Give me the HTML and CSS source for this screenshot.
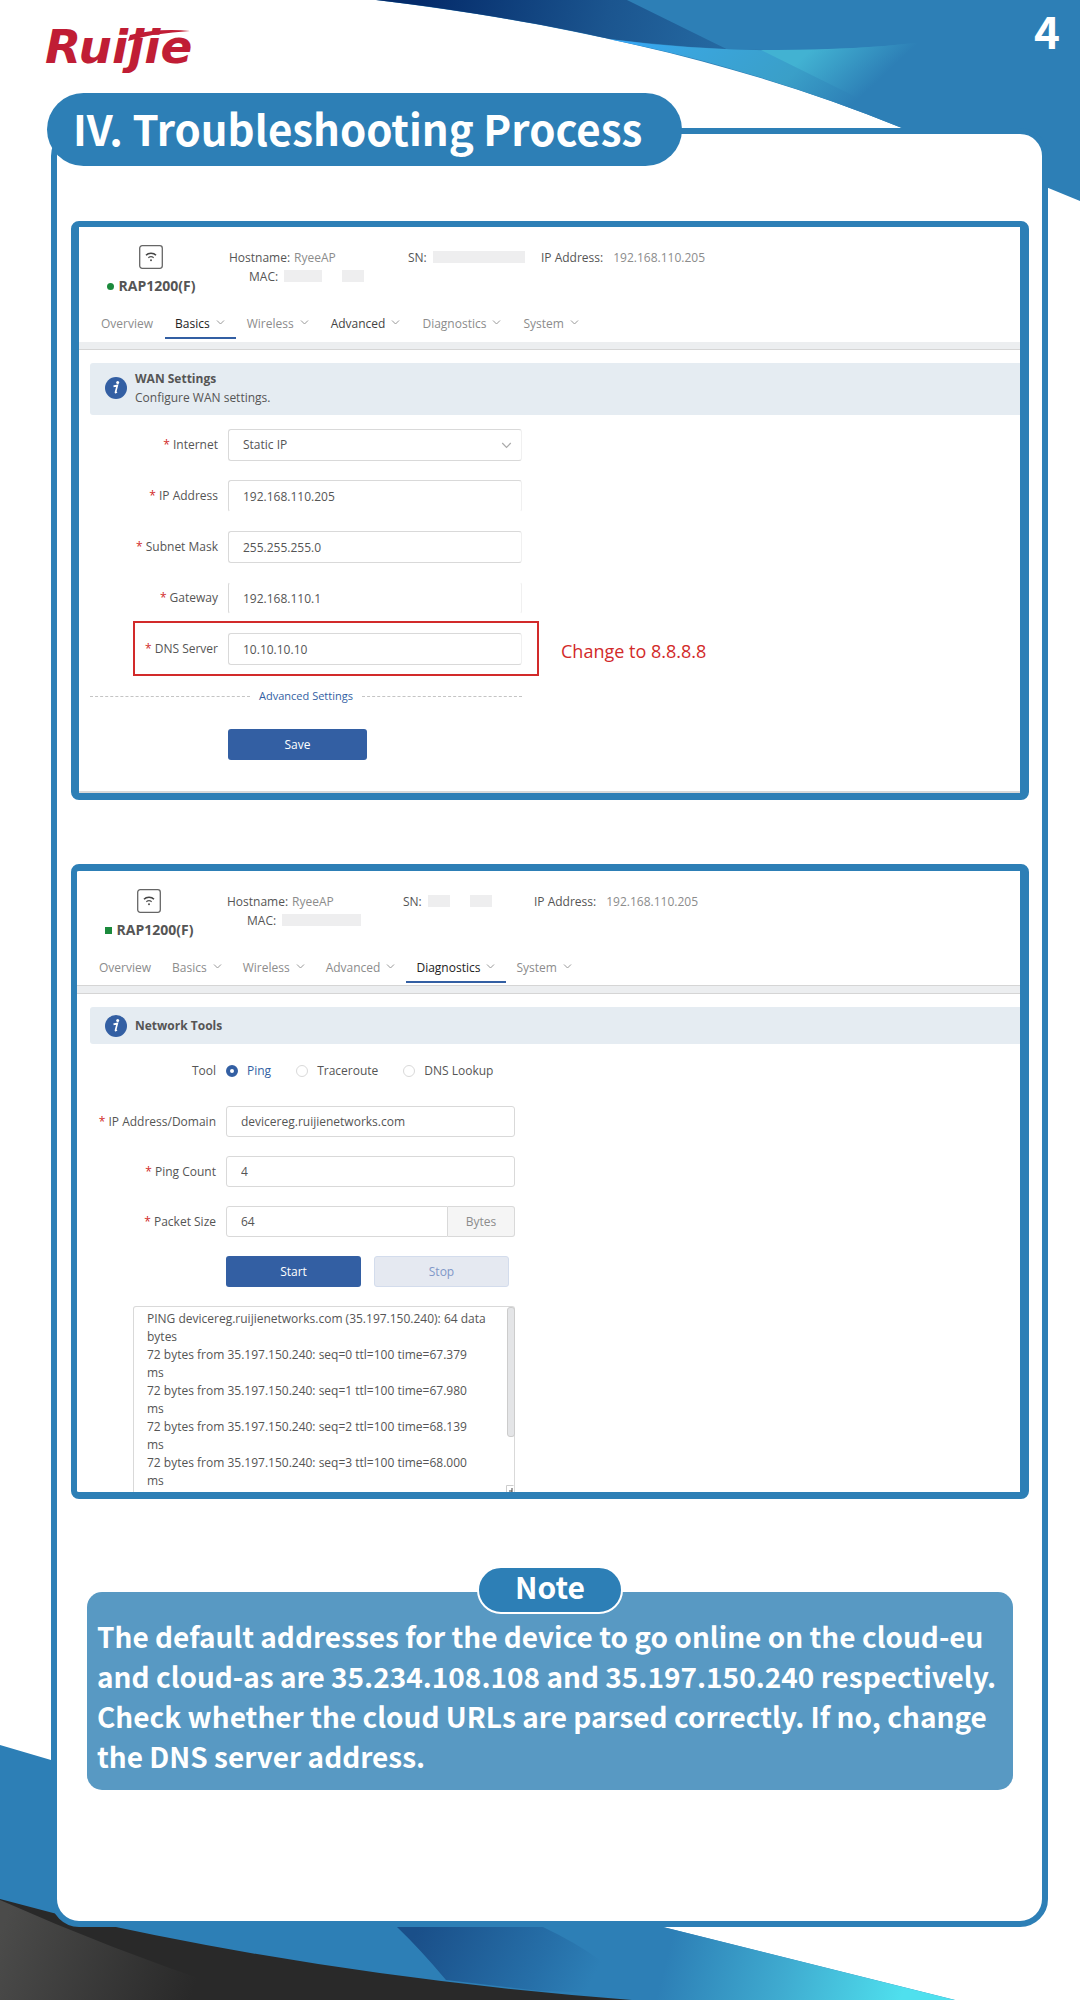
FILE: index.html
```html
<!DOCTYPE html>
<html lang="en">
<head>
<meta charset="utf-8">
<meta name="viewport" content="width=device-width, initial-scale=1">
<title>Ruijie - Troubleshooting Process</title>
<link rel="stylesheet" href="styles.css">
</head>
<body>
<svg class="defs" width="0" height="0" aria-hidden="true">
  <symbol id="chevron" viewBox="0 0 9 9"><path d="M1 2.5 4.5 6 8 2.5" fill="none" stroke="currentColor"/></symbol>
  <symbol id="ap" viewBox="0 0 24 24">
    <rect x="0.7" y="0.7" width="22.6" height="22.6" rx="2.5" fill="none" stroke="#666" stroke-width="1.3"/>
    <path d="M7 10.300C9.500 7.600 14.500 7.600 17 10.300" fill="none" stroke="#444" stroke-width="1.500"/>
    <path d="M9.300 12.800C10.800 11.500 13.200 11.500 14.700 12.800" fill="none" stroke="#555" stroke-width="1.200"/>
    <circle cx="12" cy="15.300" r="1" fill="#555"/>
  </symbol>
  <symbol id="info" viewBox="0 0 22 22">
    <circle cx="11" cy="11" r="11" fill="#335fa3"/>
    <circle cx="12.700" cy="5.500" r="1.500" fill="#fff"/>
    <path d="M8.500 9.300 12.300 8.400 10.500 15.300Q10.400 16 11.900 14.900" fill="none" stroke="#fff" stroke-width="1.700"/>
  </symbol>
</svg>
<div class="page">
  <svg class="wave wave--top" viewBox="0 0 1080 202" aria-hidden="true">
    <defs>
      <linearGradient id="navy" gradientUnits="userSpaceOnUse" x1="420" y1="0" x2="780" y2="90">
        <stop offset="0" stop-color="#042b6a"/><stop offset="0.5" stop-color="#1b558f"/><stop offset="1" stop-color="#2a74ac"/>
      </linearGradient>
      <linearGradient id="sky" gradientUnits="userSpaceOnUse" x1="703" y1="-45" x2="847" y2="110">
        <stop offset="0" stop-color="#34a7fb"/><stop offset="0.3" stop-color="#3aa5dc"/><stop offset="0.7" stop-color="#3a9fc8"/><stop offset="1" stop-color="#2d7fb6"/>
      </linearGradient>
      <linearGradient id="aqua" gradientUnits="userSpaceOnUse" x1="800" y1="60" x2="847" y2="110">
        <stop offset="0" stop-color="#42b2d2"/><stop offset="1" stop-color="#2d7fb6"/>
      </linearGradient>
    </defs>
    <path d="M376 0C560 22 740 62 902 128Q980 160 1080 201V0Z" fill="#2d7fb6"/>
    <path d="M376 0C470 11 545 25 610 39Q690 49 765 50L765 68 627 0Z" fill="url(#navy)"/>
    <path d="M608 39Q770 60 925 42L902 128C800 87 705 58 608 39Z" fill="url(#sky)"/>
    <path d="M761 50Q845 51 925 42L860 99Z" fill="url(#aqua)"/>
  </svg>
  <svg class="wave wave--bottom" viewBox="0 0 1080 256" aria-hidden="true">
    <defs>
      <linearGradient id="ash" gradientUnits="userSpaceOnUse" x1="0" y1="190" x2="190" y2="256">
        <stop offset="0" stop-color="#4b4b4a"/><stop offset="1" stop-color="#292929"/>
      </linearGradient>
      <linearGradient id="deep" gradientUnits="userSpaceOnUse" x1="420" y1="180" x2="580" y2="260">
        <stop offset="0" stop-color="#1a4f89"/><stop offset="0.7" stop-color="#266fa8"/><stop offset="1" stop-color="#2d7fb6"/>
      </linearGradient>
      <linearGradient id="cyan" gradientUnits="userSpaceOnUse" x1="660" y1="240" x2="890" y2="300">
        <stop offset="0" stop-color="#2d7fb6"/><stop offset="0.5" stop-color="#3fabd0"/><stop offset="1" stop-color="#4fe0ee"/>
      </linearGradient>
    </defs>
    <path d="M0 1 51 16 663 183 955 256H0Z" fill="#2d7fb6"/>
    <path d="M397 183Q420 205 446 236L540 247 635 250Q610 215 543 183Z" fill="url(#deep)"/>
    <path d="M625 198 663 183 955 256H640Z" fill="url(#cyan)"/>
    <path d="M0 155 57 170Q330 233 632 256H0Z" fill="#292929"/>
    <path d="M0 156Q110 205 230 245L250 256H0Z" fill="url(#ash)"/>
  </svg>

  <header class="masthead">
    <svg class="logo" viewBox="0 0 150 46" role="img" aria-label="Ruijie">
      <text class="logo__name" x="-1" y="33">Ruijie</text>
      <path class="logo__swoosh" d="M84 5Q113 -2 144 1Q108 3 82 11Z"/>
    </svg>
    <span class="masthead__page">4</span>
  </header>

  <main class="card">
    <h1 class="card__title">IV. Troubleshooting Process</h1>

    <section class="panel panel--wan">
      <div class="device">
        <div class="device__id">
          <svg class="device__icon"><use href="#ap"/></svg>
          <strong class="device__name"><i class="led"></i>RAP1200(F)</strong>
        </div>
        <dl class="facts">
          <div class="fact"><dt>Hostname:</dt><dd>RyeeAP</dd></div>
          <div class="fact"><dt>SN:</dt><dd class="mask mask--wide"></dd></div>
          <div class="fact fact--ip"><dt>IP Address:</dt><dd>192.168.110.205</dd></div>
          <div class="fact fact--mac"><dt>MAC:</dt><dd class="mask mask--short"></dd><dd class="mask mask--tiny"></dd></div>
        </dl>
      </div>
      <nav class="tabs">
        <a class="tab" href="#overview">Overview</a>
        <a class="tab tab--active" href="#basics">Basics<svg><use href="#chevron"/></svg></a>
        <a class="tab" href="#wireless">Wireless<svg><use href="#chevron"/></svg></a>
        <a class="tab tab--dark" href="#advanced">Advanced<svg><use href="#chevron"/></svg></a>
        <a class="tab" href="#diagnostics">Diagnostics<svg><use href="#chevron"/></svg></a>
        <a class="tab" href="#system">System<svg><use href="#chevron"/></svg></a>
      </nav>
      <div class="band"></div>
      <div class="banner banner--tall">
        <svg class="banner__icon"><use href="#info"/></svg>
        <div>
          <h2 class="banner__title">WAN Settings</h2>
          <p class="banner__text">Configure WAN settings.</p>
        </div>
      </div>
      <form class="form">
        <div class="row">
          <label class="label label--required" for="internet">Internet</label>
          <div class="picker">
            <select class="field" id="internet"><option>Static IP</option></select>
            <svg class="picker__arrow"><use href="#chevron"/></svg>
          </div>
        </div>
        <div class="row">
          <label class="label label--required" for="ip">IP Address</label>
          <input class="field field--no-bottom" id="ip" value="192.168.110.205">
        </div>
        <div class="row">
          <label class="label label--required" for="mask">Subnet Mask</label>
          <input class="field" id="mask" value="255.255.255.0">
        </div>
        <div class="row">
          <label class="label label--required" for="gateway">Gateway</label>
          <input class="field field--no-bottom field--no-top" id="gateway" value="192.168.110.1">
        </div>
        <div class="callout">
          <div class="row row--marked">
            <label class="label label--required" for="dns">DNS Server</label>
            <input class="field" id="dns" value="10.10.10.10">
          </div>
          <span class="callout__hint">Change to 8.8.8.8</span>
        </div>
        <div class="divider"><a href="#advanced-settings">Advanced Settings</a></div>
        <button class="button button--save" type="button">Save</button>
      </form>
    </section>

    <section class="panel panel--tools">
      <div class="device">
        <div class="device__id">
          <svg class="device__icon"><use href="#ap"/></svg>
          <strong class="device__name"><i class="led led--square"></i>RAP1200(F)</strong>
        </div>
        <dl class="facts">
          <div class="fact"><dt>Hostname:</dt><dd>RyeeAP</dd></div>
          <div class="fact"><dt>SN:</dt><dd class="mask mask--tiny"></dd><dd class="mask mask--tiny"></dd></div>
          <div class="fact fact--ip"><dt>IP Address:</dt><dd>192.168.110.205</dd></div>
          <div class="fact fact--mac"><dt>MAC:</dt><dd class="mask mask--mid"></dd></div>
        </dl>
      </div>
      <nav class="tabs">
        <a class="tab" href="#overview">Overview</a>
        <a class="tab" href="#basics">Basics<svg><use href="#chevron"/></svg></a>
        <a class="tab" href="#wireless">Wireless<svg><use href="#chevron"/></svg></a>
        <a class="tab" href="#advanced">Advanced<svg><use href="#chevron"/></svg></a>
        <a class="tab tab--active" href="#diagnostics">Diagnostics<svg><use href="#chevron"/></svg></a>
        <a class="tab" href="#system">System<svg><use href="#chevron"/></svg></a>
      </nav>
      <div class="band band--lined"></div>
      <div class="banner">
        <svg class="banner__icon"><use href="#info"/></svg>
        <h2 class="banner__title">Network Tools</h2>
      </div>
      <form class="form">
        <div class="row row--radios">
          <span class="label">Tool</span>
          <div class="radios">
            <label class="radio radio--on"><input type="radio" name="tool" checked>Ping</label>
            <label class="radio"><input type="radio" name="tool">Traceroute</label>
            <label class="radio"><input type="radio" name="tool">DNS Lookup</label>
          </div>
        </div>
        <div class="row">
          <label class="label label--required" for="domain">IP Address/Domain</label>
          <input class="field" id="domain" value="devicereg.ruijienetworks.com">
        </div>
        <div class="row">
          <label class="label label--required" for="count">Ping Count</label>
          <input class="field" id="count" value="4">
        </div>
        <div class="row">
          <label class="label label--required" for="size">Packet Size</label>
          <div class="unit">
            <input class="field" id="size" value="64">
            <span class="unit__name">Bytes</span>
          </div>
        </div>
        <div class="actions">
          <button class="button" type="button">Start</button>
          <button class="button button--off" type="button" disabled>Stop</button>
        </div>
        <div class="output">
          <textarea class="output__text" aria-label="Ping result" readonly>PING devicereg.ruijienetworks.com (35.197.150.240): 64 data
bytes
72 bytes from 35.197.150.240: seq=0 ttl=100 time=67.379
ms
72 bytes from 35.197.150.240: seq=1 ttl=100 time=67.980
ms
72 bytes from 35.197.150.240: seq=2 ttl=100 time=68.139
ms
72 bytes from 35.197.150.240: seq=3 ttl=100 time=68.000
ms</textarea>
          <span class="output__thumb"></span>
          <svg class="output__grip" viewBox="0 0 8 7"><path d="M0.500 7V0.500H7.500" fill="none" stroke="#ccc"/><path d="M6 3V7M3 6H6" stroke="#444"/></svg>
        </div>
      </form>
    </section>

    <aside class="note">
      <h2 class="note__title">Note</h2>
      <p class="note__text">The default addresses for the device to go online on the cloud-eu and cloud-as are 35.234.108.108 and 35.197.150.240 respectively. Check whether the cloud URLs are parsed correctly. If no, change the DNS server address.</p>
    </aside>
  </main>
</div>
</body>
</html>
```
FILE: styles.css
```css
:root {
  --blue: #2d7fb6;
  --action: #335fa3;
  --line: #d9d9d9;
  --text: #555;
  --muted: #8c8c8c;
  --display: "Noto Sans CJK SC", "Noto Sans", sans-serif;
  --ui: "Open Sans", "Noto Sans", sans-serif;
}

* { box-sizing: border-box; }

body { margin: 0; background: #fff; }

h1, h2, p, dl, dd { margin: 0; }

.defs { position: absolute; }

.page {
  position: relative;
  min-height: 100vh;
  padding: 0 32px 73px 51px;
}

.wave { position: absolute; left: 0; width: 100%; }
.wave--top { top: 0; }
.wave--bottom { bottom: 0; }

.masthead {
  position: relative;
  display: flex;
  justify-content: space-between;
  height: 128px;
  margin: 0 -12px 0 -5px;
}
.masthead__page {
  color: #fff;
  font: 700 44px/60px var(--display);
}

.logo { width: 150px; height: 46px; margin-top: 30px; overflow: visible; }
.logo__name { fill: #c01d35; font: italic 700 47px "DejaVu Sans", sans-serif; }
.logo__swoosh { fill: #c01d35; }

.card {
  position: relative;
  padding: 0 13px 131px 14px;
  border: 6px solid var(--blue);
  border-radius: 28px;
  background: #fff;
}
.card__title {
  width: fit-content;
  margin: -41px 0 55px -24px;
  padding: 0 40px 3px 26px;
  border-radius: 37px;
  background: var(--blue);
  color: #fff;
  font: 700 42px/70px var(--display);
}

.panel {
  overflow: hidden;
  margin-bottom: 64px;
  border: 7px solid var(--blue);
  border-radius: 8px;
  background: #fff;
  color: var(--text);
  font: 12px/18px var(--ui);
}
.panel--wan {
  --label: 128px;
  --input: 294px;
  --field: 32px;
  --inset: 11px;
  --facts: 179px 133px auto;
  --tab-gap: 1px;
  border-width: 6px 9px 7px 8px;
  padding-bottom: 33px;
  box-shadow: inset 0 -2px 0 var(--line);
}
.panel--tools {
  --label: 126px;
  --input: 289px;
  --field: 31px;
  --inset: 13px;
  --facts: 176px 131px auto;
  --tab-gap: 0px;
  border-width: 7px 9px 7px 6px;
}

.device { display: flex; gap: 34px; padding: 18px 0 0 28px; }
.device__id { display: flex; flex-direction: column; align-items: center; gap: 8px; width: 88px; }
.device__icon { width: 24px; height: 24px; }
.device__name { display: flex; align-items: center; gap: 5px; font-size: 14px; line-height: 18px; }
.led { width: 7px; height: 7px; border-radius: 50%; background: #1b8a3c; }
.led--square { border-radius: 0; }

.facts {
  display: grid;
  grid-template-columns: var(--facts);
  grid-auto-rows: 19px;
  padding-top: 4px;
}
.fact { display: flex; gap: 4px; white-space: nowrap; }
.fact dd { color: var(--muted); }
.fact--ip { gap: 10px; }
.fact--mac { padding-left: 20px; }
.mask { height: 12px; margin: 2px 14px 0 2px; background: #eeeeef; }
.mask--wide { width: 92px; }
.mask--mid { width: 79px; }
.mask--short { width: 38px; }
.mask--tiny { width: 22px; }

.tabs { display: flex; gap: var(--tab-gap); margin-top: 20px; padding-left: 12px; }
.tab {
  display: flex;
  gap: 6px;
  padding: 0 11px 4px 10px;
  border-bottom: 2px solid transparent;
  color: var(--muted);
  text-decoration: none;
}
.tab svg { width: 9px; height: 9px; margin-top: 3px; color: #999; }
.tab--active { border-color: var(--action); color: #222; }
.tab--dark { color: #444; }

.band { height: 8px; margin-top: 3px; border-bottom: 1px solid #d5d5d5; background: #eceef0; }
.band--lined { height: 9px; margin-top: 2px; border-top: 1px solid #d5d5d5; }

.banner {
  display: flex;
  align-items: center;
  gap: 8px;
  min-height: 37px;
  margin: 13px 0 0 var(--inset);
  padding: 0 15px;
  border-radius: 3px 0 0 3px;
  background: #e5ecf2;
}
.banner--tall { min-height: 52px; padding-bottom: 2px; }
.banner__icon { width: 22px; height: 22px; }
.banner__title { font-size: 12px; line-height: 19px; }
.banner__text { line-height: 19px; }

.form { display: flex; flex-direction: column; gap: 19px; margin: 14px 0 0 var(--inset); }
.panel--tools .form { margin-top: 18px; }
.row { display: grid; grid-template-columns: var(--label) var(--input); column-gap: 10px; align-items: center; }
.label { text-align: right; }
.label--required::before { content: "* "; color: #d22a2a; }

.field {
  width: 100%;
  height: var(--field);
  padding: 0 14px;
  border: 1px solid var(--line);
  border-radius: 3px;
  background: #fff;
  color: var(--text);
  font: inherit;
  appearance: none;
}
.panel--wan .field { border-right-color: #f0f0f0; }
.panel--wan .field--no-bottom { border-bottom-color: transparent; }
.panel--wan .field--no-top { border-top-color: transparent; }

.picker { position: relative; }
.picker__arrow { position: absolute; top: 11px; right: 10px; width: 11px; height: 11px; color: #aaa; }

.callout { display: flex; align-items: center; gap: 22px; margin: -12px 0 0 43px; }
.row--marked {
  --label: 83px;
  padding: 10px 15px 9px 0;
  border: 2px solid #d22a2a;
}
.callout__hint { padding-top: 4px; color: #d22a2a; font-size: 18px; line-height: 24px; }

.divider {
  display: flex;
  align-items: center;
  gap: 9px;
  width: 432px;
  margin-top: -8px;
}
.divider::before, .divider::after { content: ""; flex: 1; border-top: 1px dashed #c4c4c4; }
.divider a { color: var(--action); font-size: 11px; text-decoration: none; }

.button {
  width: 135px;
  height: 31px;
  border: 0;
  border-radius: 3px;
  background: var(--action);
  color: #fff;
  font: inherit;
}
.button--save { width: 139px; margin: 5px 0 0 138px; }
.button--off { border: 1px solid #d3dcec; background: #e5e9f1; color: #8097c8; }

.row--radios { align-items: start; height: 25px; }
.radios { display: flex; }
.radio { display: flex; align-items: center; gap: 9px; margin-right: 25px; white-space: nowrap; }
.radio input { width: 12px; height: 12px; margin: 0; border: 1px solid var(--line); border-radius: 50%; background: #fff; appearance: none; }
.radio input:checked { border: 4px solid var(--action); }
.radio--on { color: var(--action); }

.unit { display: flex; }
.unit .field { flex: 1; min-width: 0; border-radius: 3px 0 0 3px; }
.unit__name {
  width: 67px;
  border: 1px solid var(--line);
  border-left: 0;
  border-radius: 0 3px 3px 0;
  background: #f5f5f5;
  color: var(--muted);
  line-height: 29px;
  text-align: center;
}

.actions { display: flex; gap: 13px; margin-left: 136px; }

.output { position: relative; width: 382px; height: 186px; margin-left: 43px; }
.output__text {
  display: block;
  width: 100%;
  height: 100%;
  padding: 3px 18px 0 13px;
  overflow: hidden;
  border: 1px solid var(--line);
  border-bottom: 0;
  border-radius: 3px 3px 0 0;
  color: var(--text);
  font: inherit;
  resize: none;
}
.output__thumb {
  position: absolute;
  top: 1px;
  right: 0;
  width: 8px;
  height: 130px;
  border: 1px solid #ccc;
  border-radius: 3px;
  background: #e4e5e7;
}
.output__grip { position: absolute; right: 1px; bottom: 0; width: 8px; height: 7px; }

.note { margin: 67px 16px 0; color: #fff; font-family: var(--display); font-weight: 700; }
.note__title {
  position: relative;
  width: 146px;
  margin: 0 auto -22px;
  padding-bottom: 7px;
  border: 2px solid #fff;
  border-radius: 24px;
  background: var(--blue);
  font-size: 30px;
  line-height: 37px;
  text-align: center;
}
.note__text {
  padding: 24px 0 14px 10px;
  border-radius: 15px;
  background: #5899c3;
  font-size: 28px;
  line-height: 40px;
}
```
